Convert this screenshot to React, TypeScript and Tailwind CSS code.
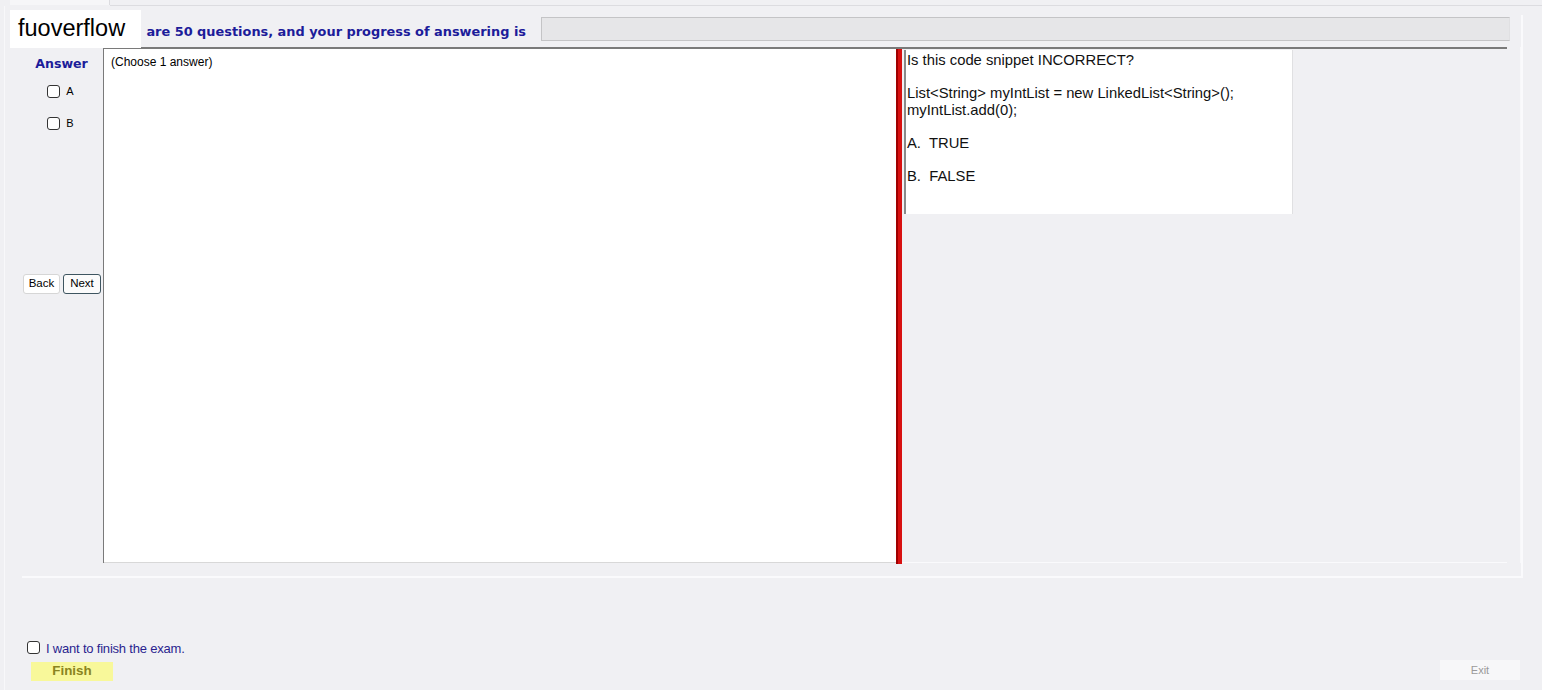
import React from "react";

export default function App() {
  return (
    <div className="relative w-[1542px] h-[690px] bg-[#f0f0f3] overflow-hidden" style={{ fontFamily: '"Liberation Sans", Arial, sans-serif' }}>
      {/* top strip */}
      <div className="h-[6px] flex">
        <div className="ml-[10px] w-[100px] h-[5px] bg-[#f6f6f8] border-r border-[#dcdce0]" />
        <div className="flex-1 border-b border-[#dcdce0]" />
      </div>
      <div className="mx-[4px] h-[684px] bg-[#f0f0f3] border-l border-[#f8f8fa] flex flex-col">
        {/* group panel */}
        <div className="mt-[9px] ml-[17px] w-[1501px] h-[563px] border-r-2 border-b-2 border-[#fafafc] flex flex-col">
          {/* header row */}
          <div className="h-[32px] flex items-start pt-[2px]">
            <div className="w-[519px] h-[24px] flex items-center justify-end pr-[15px] pt-[6px]">
              <span className="text-[12.9px] font-bold text-[#1c1c9a] whitespace-nowrap" style={{ fontFamily: '"DejaVu Sans", Verdana, sans-serif' }}>are 50 questions, and your progress of answering is</span>
            </div>
            <div className="w-[969px] h-[24px] bg-[#e6e6e8] border border-[#c4c4c6] border-r-[#e0e0e2]" />
          </div>
          {/* content row */}
          <div className="flex h-[516px] border-r border-[#f8f8fa]">
            <div className="w-[81px] flex flex-col items-center">
              <div className="mt-[8px] text-[12.6px] font-bold text-[#1c1c9a] -ml-[2px]" style={{ fontFamily: '"DejaVu Sans", Verdana, sans-serif' }}>Answer</div>
              <label className="mt-[9px] flex items-center gap-[6px] text-[11px] text-black -ml-[4px]">
                <span className="w-[13px] h-[13px] rounded-[3px] border border-[#333] bg-white" />A
              </label>
              <label className="mt-[16px] flex items-center gap-[6px] text-[11px] text-black -ml-[4px]">
                <span className="w-[13px] h-[13px] rounded-[3px] border border-[#333] bg-white" />B
              </label>
              <div className="mt-[142px] flex gap-[3px] -ml-[1px]">
                <button className="w-[37px] h-[20px] bg-white border border-[#d6d6d6] rounded-[3px] text-[11.5px] text-black flex items-center justify-center">Back</button>
                <button className="w-[38px] h-[20px] bg-[#fbfbfb] border border-[#3e5560] rounded-[3px] text-[11.5px] text-black flex items-center justify-center">Next</button>
              </div>
            </div>
            <div className="flex-1 flex border-t-2 border-t-[#7a7a7a] border-l border-l-[#7a7a7a] mr-[13px] relative">
              <div className="w-[792px] bg-white border-b border-[#d8d8d8] pl-[7px] pt-[4px] text-[12px] text-black">(Choose 1 answer)</div>
              <div className="w-[6px] bg-[#d81010] border-l-2 border-[#a00000] -mb-[1px]" />
              <div className="flex-1 bg-[#f0f0f3] border-b border-[#fafafc]">
                <div className="ml-[2px] mt-[1px] w-[389px] h-[164px] bg-white border-l-2 border-[#8a8a8a] border-r border-r-[#e0e0e2] pl-[1px] pt-[2px] text-[14.8px] leading-[16.5px] text-[#111]">
                  <div>Is this code snippet INCORRECT?</div>
                  <div className="mt-[16.5px]">List&lt;String&gt; myIntList = new LinkedList&lt;String&gt;();</div>
                  <div>myIntList.add(0);</div>
                  <div className="mt-[16.5px]">A.&nbsp; TRUE</div>
                  <div className="mt-[16.5px]">B.&nbsp; FALSE</div>
                </div>
              </div>
            </div>
          </div>
        </div>
        {/* bottom */}
        <div className="mt-[58px] ml-[22px] flex items-center gap-[6px]">
          <span className="w-[13px] h-[13px] rounded-[3px] border border-[#333] bg-white" />
          <span className="text-[13px] text-[#2a1f8f] tracking-[-0.2px] mt-[3px]">I want to finish the exam.</span>
        </div>
        <div className="mt-[3px] flex items-center justify-between">
          <div className="ml-[26px] w-[82px] h-[19px] bg-[#f8f89a] flex items-center justify-center text-[13.4px] font-bold text-[#8a8420]">Finish</div>
          <div className="mr-[18px] -mt-[2px] w-[80px] h-[20px] bg-[#f7f7f9] flex items-center justify-center text-[11px] text-[#9a9a9a]">Exit</div>
        </div>
      </div>
      {/* watermark */}
      <div className="absolute left-[10px] top-[10px] w-[131px] h-[38px] bg-white flex items-center pl-[8px] text-[23.5px] text-black">fuoverflow</div>
    </div>
  );
}
